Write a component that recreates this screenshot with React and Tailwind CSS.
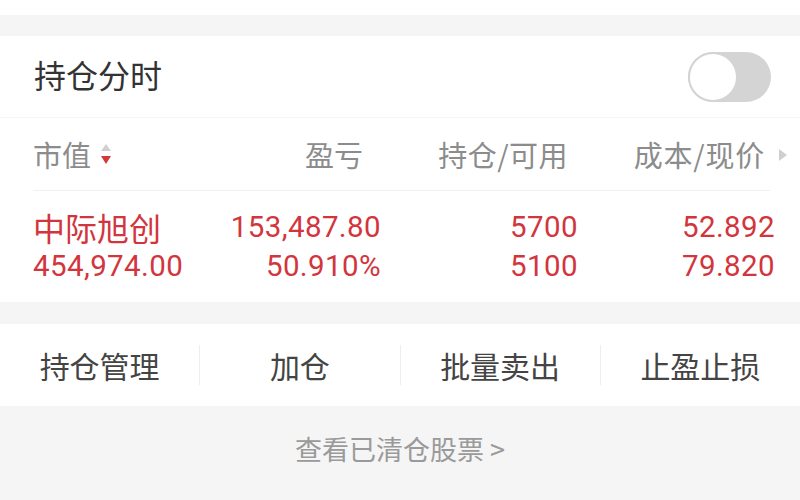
const font = { fontFamily: '"Noto Sans CJK SC", Roboto, "Noto Sans", sans-serif' }
const num = { fontFamily: 'Roboto, sans-serif' }

const rows = [
  { name: '中际旭创', value: '454,974.00', pnl: '153,487.80', pct: '50.910%', hold: '5700', avail: '5100', cost: '52.892', price: '79.820' },
]

const actions = ['持仓管理', '加仓', '批量卖出', '止盈止损']

function Toggle() {
  return (
    <div className="w-[83px] h-[50px] rounded-full bg-[#d4d4d4] flex items-center">
      <div className="w-[50px] h-[50px] rounded-full bg-white border-2 border-[#d4d4d4]" />
    </div>
  )
}

function SortArrows() {
  return (
    <svg width="14" height="26" viewBox="0 0 14 26" className="ml-[8px]">
      <path d="M7 3 L12 10 L2 10 Z" fill="#d0d0d0" />
      <path d="M7 23 L12 15 L2 15 Z" fill="#d23a3a" />
    </svg>
  )
}

export default function App() {
  return (
    <div className="w-[800px] h-[500px] bg-[#f5f5f5] overflow-hidden" style={font}>
      <div className="h-[15px] bg-white" />
      <div className="h-[21px]" />

      {/* position card */}
      <div className="bg-white">
        <div className="h-[82px] flex items-center justify-between pl-[34px] pr-[29px] border-b border-[#f6f6f6]">
          <span className="text-[32px] text-[#333] leading-none -mt-[6px]">持仓分时</span>
          <Toggle />
        </div>

        <div className="pl-[33px] pr-[25px]">
          <div className="h-[73px] flex items-center text-[29px] text-[#8c8c8c] border-b border-[#f0f0f0] leading-none mr-[5px]">
            <div className="w-[170px] flex items-center">
              <span>市值</span>
              <SortArrows />
            </div>
            <div className="w-[160px] text-right">盈亏</div>
            <div className="w-[205px] text-right tracking-[0.5px]">持仓/可用</div>
            <div className="flex-1 text-right tracking-[0.8px] relative pr-[5px]">
              成本/现价
              <svg width="10" height="14" viewBox="0 0 10 14" className="absolute right-[-18px] top-[8px]">
                <path d="M1 1 L9 7 L1 13 Z" fill="#cfcfcf" />
              </svg>
            </div>
          </div>

          {rows.map((r) => (
            <div key={r.name} className="h-[111px] flex items-center text-[#d2353d] text-[29.5px] leading-[39px] tracking-[0.4px]">
              <div className="w-[170px] flex flex-col">
                <span className="text-[32px] tracking-normal">{r.name}</span>
                <span style={num}>{r.value}</span>
              </div>
              <div className="w-[178px] flex flex-col items-end" style={num}>
                <span>{r.pnl}</span>
                <span>{r.pct}</span>
              </div>
              <div className="w-[197px] flex flex-col items-end" style={num}>
                <span>{r.hold}</span>
                <span>{r.avail}</span>
              </div>
              <div className="flex-1 flex flex-col items-end" style={num}>
                <span>{r.cost}</span>
                <span>{r.price}</span>
              </div>
            </div>
          ))}
        </div>
      </div>

      <div className="h-[22px]" />

      {/* actions */}
      <div className="h-[82px] bg-white flex items-center">
        {actions.map((a, i) => (
          <div
            key={a}
            className={`flex-1 h-[40px] flex items-center justify-center text-[30px] text-[#444] ${i < actions.length - 1 ? 'border-r border-[#eeeeee]' : ''}`}
          >
            {a}
          </div>
        ))}
      </div>

      <div className="h-[93px] flex items-center justify-center text-[27px] text-[#9a9a9a] pb-[6px]">
        查看已清仓股票 &gt;
      </div>
    </div>
  )
}
